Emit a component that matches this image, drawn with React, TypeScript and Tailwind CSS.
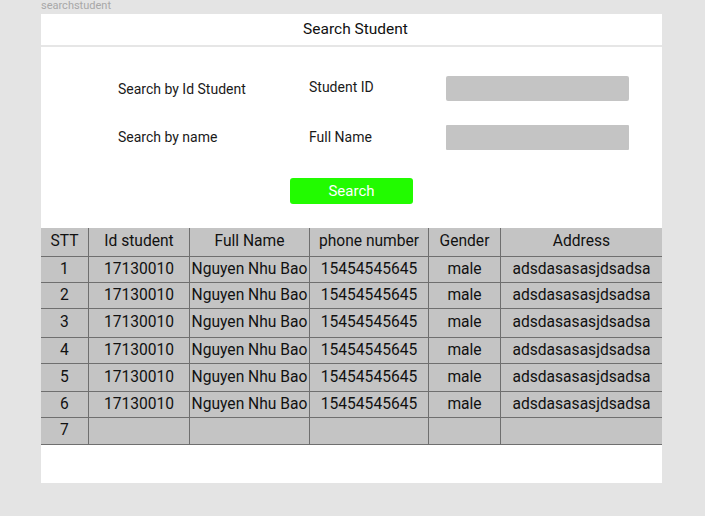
import React from "react";

const cols = [47, 101, 120, 119, 72, 162];
const headers = ["STT", "Id student", "Full Name", "phone number", "Gender", "Address"];
const rowHeights = [28, 26, 26, 29, 26, 28, 26, 27];

const rows: string[][] = [1, 2, 3, 4, 5, 6].map((n) => [
  String(n),
  "17130010",
  "Nguyen Nhu Bao",
  "15454545645",
  "male",
  "adsdasasasjdsadsa",
]);
rows.push(["7", "", "", "", "", ""]);

export default function App() {
  return (
    <div
      className="w-[705px] h-[516px] bg-[#e4e4e4] overflow-hidden"
      style={{ fontFamily: "Roboto, 'Noto Sans', sans-serif" }}
    >
      <div className="pl-[41px]">
        <div className="h-[14px] text-[11px] leading-[11px] text-[#a8a8a8]">searchstudent</div>
        <div className="w-[621px] h-[469px] bg-white flex flex-col">
          <div className="h-[31px] flex items-center justify-center pl-[8px] text-[15.5px] text-[#111]">
            Search Student
          </div>
          <div className="h-[2px] bg-[#e6e6e6]" />
          <div className="pt-[29px] flex flex-col gap-[24px] text-[14px] text-[#1a1a1a]">
            <div className="flex items-center h-[25px]">
              <div className="w-[268px] pl-[77px] pt-[1px]">Search by Id Student</div>
              <div className="w-[137px] -mt-[3px]">Student ID</div>
              <div className="w-[183px] h-[25px] bg-[#c4c4c4] rounded-[2px]" />
            </div>
            <div className="flex items-center h-[25px]">
              <div className="w-[268px] pl-[77px]">Search by name</div>
              <div className="w-[137px]">Full Name</div>
              <div className="w-[183px] h-[25px] bg-[#c4c4c4] rounded-[1px]" />
            </div>
          </div>
          <div className="pt-[28px] flex justify-center">
            <div className="w-[123px] h-[26px] bg-[#22fb00] rounded-[3px] flex items-center justify-center text-white text-[15px]">
              Search
            </div>
          </div>
          <div className="mt-[24px] bg-[#c4c4c4] text-[15.6px] text-[#111]">
            {[headers, ...rows].map((r, ri) => (
              <div
                key={ri}
                className={`flex ${ri > 0 ? "border-t border-[#6f6f6f]" : ""}`}
                style={{ height: rowHeights[ri] }}
              >
                {r.map((c, ci) => (
                  <div
                    key={ci}
                    className={`flex items-center justify-center whitespace-nowrap ${ci > 0 ? "border-l border-[#6f6f6f]" : ""}`}
                    style={{ width: cols[ci] }}
                  >
                    {c}
                  </div>
                ))}
              </div>
            ))}
            <div className="h-[1px] bg-[#6f6f6f]" />
          </div>
        </div>
      </div>
    </div>
  );
}
